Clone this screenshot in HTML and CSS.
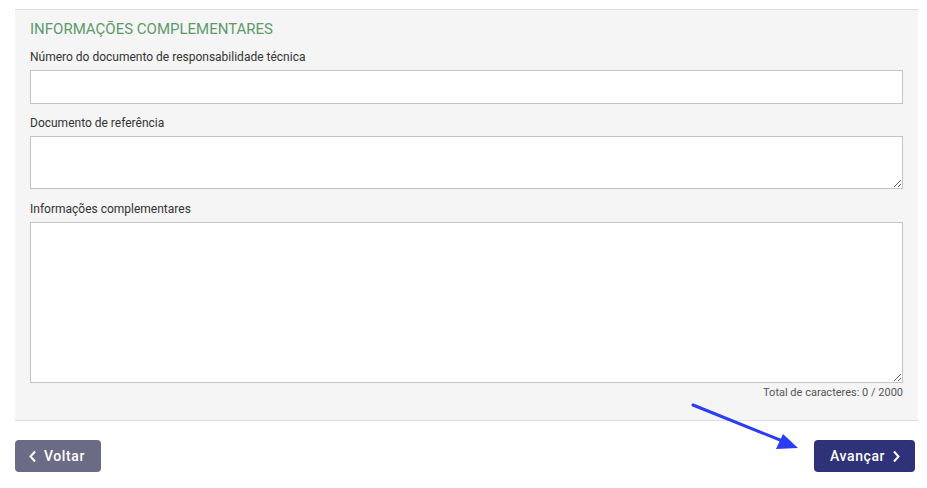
FILE: index.html
```html
<!DOCTYPE html>
<html lang="pt-BR">
<head>
    <meta charset="UTF-8">
    <meta name="viewport" content="width=device-width, initial-scale=1.0">
    <title>Informações complementares</title>
    <link rel="stylesheet" href="styles.css">
</head>
<body>
    <div class="panel">
        <h2 class="panel-title">INFORMAÇÕES COMPLEMENTARES</h2>
        <div class="field">
            <label>Número do documento de responsabilidade técnica</label>
            <input type="text" class="input">
        </div>
        <div class="field">
            <label>Documento de referência</label>
            <textarea class="input area-small"></textarea>
        </div>
        <div class="field">
            <label>Informações complementares</label>
            <textarea class="input area-large"></textarea>
            <div class="counter">Total de caracteres: 0 / 2000</div>
        </div>
    </div>

    <div class="actions">
        <button class="btn btn-back">
            <svg width="9" height="13" viewBox="0 0 9 13"><path d="M7 1.5 L2.5 6.5 L7 11.5" fill="none" stroke="#fff" stroke-width="2"/></svg>
            Voltar
        </button>
        <button class="btn btn-next">
            Avançar
            <svg width="9" height="13" viewBox="0 0 9 13"><path d="M2 1.5 L6.5 6.5 L2 11.5" fill="none" stroke="#fff" stroke-width="2"/></svg>
        </button>
        <!-- seta de destaque -->
        <svg class="hint-arrow" width="120" height="56" viewBox="0 0 120 56">
            <line x1="2" y1="2" x2="94" y2="39" stroke="#2b3cf5" stroke-width="3" stroke-linecap="round"/>
            <polygon points="107,45 85,46 92,31" fill="#2b3cf5"/>
        </svg>
    </div>
</body>
</html>
```

FILE: styles.css
```css
body { margin: 0; font-family: Roboto, "Liberation Sans", Arial, sans-serif; color: #333; background: #fff; }

.panel {
    margin: 9px 9px 0 15px;
    background: #f5f5f5;
    border-top: 1px solid #dcdcdc;
    border-bottom: 1px solid #dcdcdc;
    padding: 10px 15px 20px 15px;
}
.panel-title {
    margin: 0 0 12px 0;
    font-size: 15px;
    font-weight: 400;
    color: #5d9a6b;
    line-height: 18px;
}

.field { display: flex; flex-direction: column; }
.field label { font-size: 12px; line-height: 14px; color: #333; margin-bottom: 6px; }

.input {
    box-sizing: border-box;
    width: 100%;
    border: 1px solid #c4c4c4;
    background: #fff;
    margin: 0;
    padding: 4px 6px;
    font-family: inherit;
    font-size: 13px;
    outline: none;
}
input.input { height: 34px; margin-bottom: 12px; }
.area-small { height: 53px; resize: vertical; margin-bottom: 13px; }
.area-large { height: 161px; resize: vertical; margin-bottom: 3px; }

.counter { text-align: right; font-size: 11px; color: #555; line-height: 14px; }

.actions {
    position: relative;
    display: flex;
    justify-content: space-between;
    margin: 19px 12px 0 15px;
}

.btn {
    display: flex;
    align-items: center;
    gap: 7px;
    height: 32px;
    border: none;
    border-radius: 4px;
    color: #fff;
    font-family: Roboto, "Liberation Sans", Arial, sans-serif;
    font-size: 14px;
    font-weight: 500;
    letter-spacing: 0.6px;
    cursor: pointer;
}
.btn-back { background: #6b6b86; padding: 0 16px 0 13px; width: 86px; }
.btn-next { background: #2f3179; padding: 0 13px 0 16px; width: 101px; }

.hint-arrow { position: absolute; left: 676px; top: -37px; }
```
